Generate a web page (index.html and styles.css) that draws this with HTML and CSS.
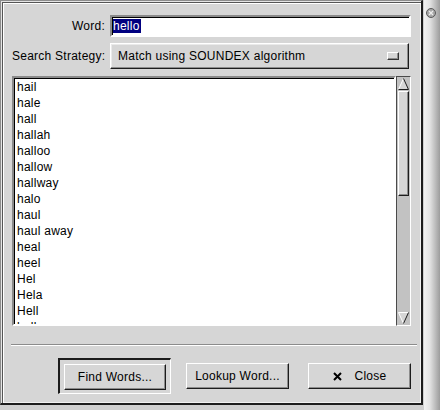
FILE: index.html
```html
<!DOCTYPE html>
<html>
<head>
<meta charset="utf-8">
<title>Dictionary</title>
<link rel="stylesheet" href="styles.css">
</head>
<body>
<div class="screen">
  <div class="win">
    <div class="form">
      <span class="lbl">Word:</span>
      <div class="entry"><span class="sel">hello</span></div>
      <span class="lbl">Search Strategy:</span>
      <div class="optmenu"><span class="optval">Match using SOUNDEX algorithm</span><span class="ind"></span></div>
    </div>
    <div class="listwrap">
      <ul class="list">
        <li>hail</li>
        <li>hale</li>
        <li>hall</li>
        <li>hallah</li>
        <li>halloo</li>
        <li>hallow</li>
        <li>hallway</li>
        <li>halo</li>
        <li>haul</li>
        <li>haul away</li>
        <li>heal</li>
        <li>heel</li>
        <li>Hel</li>
        <li>Hela</li>
        <li>Hell</li>
        <li>hell</li>
      </ul>
      <div class="sbar">
        <svg class="arr" width="11" height="12" viewBox="0 0 11 12">
          <polygon points="5.5,0.5 10.5,11.5 0.5,11.5" fill="#d6d6d6"/>
          <line x1="5.5" y1="0.5" x2="0.5" y2="11.5" stroke="#ffffff" stroke-width="1"/>
          <line x1="5.5" y1="0.5" x2="10.5" y2="11.5" stroke="#1c1c1c" stroke-width="1"/>
          <line x1="0.5" y1="11.5" x2="10.5" y2="11.5" stroke="#1c1c1c" stroke-width="1"/>
        </svg>
        <div class="slider"></div>
        <div class="trough"></div>
        <svg class="arr" width="11" height="12" viewBox="0 0 11 12">
          <polygon points="0.5,0.5 10.5,0.5 5.5,11.5" fill="#d6d6d6"/>
          <line x1="0.5" y1="0.5" x2="10.5" y2="0.5" stroke="#ffffff" stroke-width="1"/>
          <line x1="0.5" y1="0.5" x2="5.5" y2="11.5" stroke="#ffffff" stroke-width="1"/>
          <line x1="10.5" y1="0.5" x2="5.5" y2="11.5" stroke="#1c1c1c" stroke-width="1"/>
        </svg>
      </div>
    </div>
    <div class="sep"></div>
    <div class="buttons">
      <div class="defframe"><button class="btn btn-find">Find Words...</button></div>
      <button class="btn btn-lookup">Lookup Word...</button>
      <button class="btn btn-close"><svg class="xicon" width="9" height="9" viewBox="0 0 9 9"><path d="M1 1 L8 8 M8 1 L1 8" stroke="#000" stroke-width="2" fill="none"/></svg><span>Close</span></button>
    </div>
  </div>
  <div class="strip">
    <svg class="wmclose" width="10" height="10" viewBox="0 0 10 10">
      <circle cx="5" cy="5" r="4.5" fill="#a6a6a6" stroke="#5a5a5a" stroke-width="1"/>
      <path d="M3 3 L7 7 M7 3 L3 7" stroke="#ececec" stroke-width="1.3" fill="none"/>
    </svg>
  </div>
</div>
</body>
</html>
```
FILE: styles.css
```css
* { box-sizing: border-box; }
html, body { margin: 0; padding: 0; }
body {
  width: 440px;
  height: 410px;
  overflow: hidden;
  background: #cfcfcf;
  font-family: "Liberation Sans", Arial, sans-serif;
  font-size: 12px;
  letter-spacing: 0.25px;
  color: #000;
}
.screen { display: flex; height: 410px; }
.win {
  width: 423px;
  height: 405px;
  flex: none;
  background: #d6d6d6;
  border-top: 1px solid #8c8c8c;
  border-left: 1px solid #8c8c8c;
  border-right: 2px solid #1c1c1c;
  border-bottom: 2px solid #1c1c1c;
  box-shadow: inset 1px 1px #e4e4e4, inset 2px 2px #555555, inset 3px 3px #ffffff, inset -1px -1px #f0f0f0;
  padding: 14px 4px 0 11px;
  display: flex;
  flex-direction: column;
}
.form {
  display: grid;
  grid-template-columns: 93px 1fr;
  column-gap: 5px;
  row-gap: 6px;
  align-items: center;
}
.lbl { text-align: right; white-space: nowrap; }
.entry {
  height: 22px;
  margin-right: 6px;
  background: #fff;
  border: 2px solid;
  border-color: #8a8a8a #ffffff #ffffff #8a8a8a;
  box-shadow: inset 1px 1px #000;
  padding-left: 1px;
  display: flex;
  align-items: center;
}
.sel { background: #000080; color: #fff; line-height: 14px; padding-right: 1px; }
.optmenu {
  height: 26px;
  margin-right: 8px;
  border: 1px solid;
  border-color: #ffffff #1c1c1c #1c1c1c #ffffff;
  box-shadow: inset -1px -1px #8c8c8c, inset 1px 1px #eaeaea;
  display: flex;
  align-items: center;
  justify-content: space-between;
  padding: 0 9px 0 7px;
}
.ind {
  width: 12px;
  height: 8px;
  border: 1px solid;
  border-color: #ffffff #333333 #333333 #ffffff;
  box-shadow: inset -1px -1px #8c8c8c;
}
.listwrap {
  margin-top: 7px;
  margin-right: 6px;
  height: 250px;
  display: flex;
}
.list {
  flex: 1;
  margin: 0;
  padding: 1px 0 0 3px;
  list-style: none;
  background: #fff;
  border: 2px solid;
  border-color: #8a8a8a #ffffff #ffffff #8a8a8a;
  box-shadow: inset 1px 1px #000;
  overflow: hidden;
}
.list li { height: 16px; line-height: 16px; white-space: nowrap; }
.sbar {
  width: 15px;
  flex: none;
  border: 1px solid;
  border-color: #4a4a4a #ffffff #ffffff #4a4a4a;
  background: #c2c2c2;
  padding: 1px;
  display: flex;
  flex-direction: column;
}
.arr { display: block; flex: none; }
.slider {
  margin-top: 1px;
  height: 105px;
  flex: none;
  background: #d6d6d6;
  border: 1px solid;
  border-color: #ffffff #1c1c1c #1c1c1c #ffffff;
  box-shadow: inset -1px -1px #8c8c8c;
}
.trough { flex: 1; }
.sep {
  margin-top: 18px;
  margin-left: -1px;
  height: 2px;
  border-top: 1px solid #8c8c8c;
  border-bottom: 1px solid #ffffff;
}
.buttons {
  display: flex;
  align-items: flex-start;
  margin-top: 12px;
  padding-left: 46px;
}
.defframe {
  border-style: solid;
  border-width: 2px 1px 1px 2px;
  border-color: #1c1c1c #ffffff #ffffff #1c1c1c;
  padding: 4px 4px 3px 4px;
}
.btn {
  font: inherit;
  letter-spacing: inherit;
  color: #000;
  background: #d6d6d6;
  height: 26px;
  margin: 0;
  padding: 0;
  border: 1px solid;
  border-color: #ffffff #1c1c1c #1c1c1c #ffffff;
  box-shadow: inset -1px -1px #8c8c8c;
  display: flex;
  align-items: center;
  justify-content: center;
}
.btn-find { width: 102px; }
.btn-lookup { width: 103px; margin-left: 15px; margin-top: 5px; }
.btn-close { width: 103px; margin-left: 19px; margin-top: 5px; gap: 13px; }
.xicon { display: block; }
.strip {
  width: 16px;
  margin-left: 1px;
  height: 410px;
  flex: none;
  background: linear-gradient(to right, #f2f2f2, #e4e4e4 35%, #9c9c9c);
  padding: 8px 0 0 2px;
}
.wmclose { display: block; }
```
